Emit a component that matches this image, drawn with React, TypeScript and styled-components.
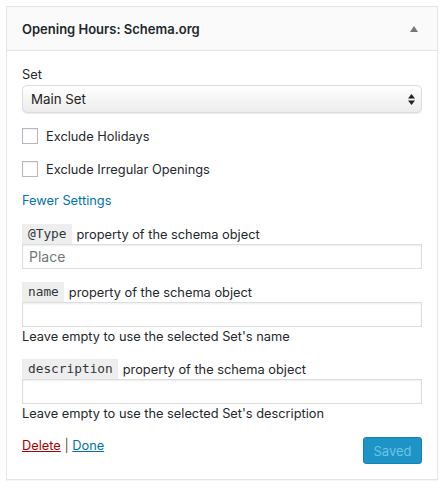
import React from "react";
import styled, { createGlobalStyle } from "styled-components";

const Global = createGlobalStyle`
  html, body { margin: 0; padding: 0; background: #fff; }
  body { font-family: "Inter", "Noto Sans", sans-serif; color: #23282d; }
  * { box-sizing: border-box; }
`;

const Page = styled.div`
  padding: 6px 4px 6px 6px;
`;

const Widget = styled.div`
  width: 432px;
  border: 1px solid #e5e5e5;
  background: #fff;
  box-shadow: 0 1px 1px rgba(0,0,0,0.04);
`;

const Header = styled.div`
  height: 44px;
  display: flex;
  align-items: center;
  justify-content: space-between;
  padding: 0 19px 0 15px;
  background: #fafafa;
  border-bottom: 1px solid #e5e5e5;
`;

const Title = styled.h3`
  margin: 0;
  font-size: 13px;
  font-weight: 600;
  color: #23282d;
`;

const Arrow = styled.span`
  width: 0;
  height: 0;
  border-left: 4px solid transparent;
  border-right: 4px solid transparent;
  border-bottom: 6px solid #72777c;
`;

const Body = styled.div`
  padding: 15px 15px 15px 15px;
  font-size: 12.8px;
`;

const Label = styled.div`
  line-height: 18px;
  margin-bottom: 1px;
`;

const SelectBox = styled.div`
  height: 28px;
  display: flex;
  align-items: center;
  justify-content: space-between;
  padding: 0 6px 0 8px;
  border: 1px solid #dcdcdc;
  border-radius: 5px;
  background: linear-gradient(#ffffff, #ececec);
  box-shadow: 0 1px 1px rgba(0,0,0,0.08);
  font-size: 13.3px;
  color: #222;
`;

const CheckRow = styled.label<{ $top: number }>`
  display: flex;
  align-items: center;
  gap: 8px;
  height: 16px;
  margin-top: ${(p) => p.$top}px;
`;

const Box = styled.span`
  width: 16px;
  height: 16px;
  border: 1px solid #b4b9be;
  background: #fff;
  box-shadow: inset 0 1px 2px rgba(0,0,0,0.07);
`;

const Link = styled.a<{ $danger?: boolean; $underline?: boolean }>`
  color: ${(p) => (p.$danger ? "#a00" : "#0073aa")};
  text-decoration: ${(p) => (p.$underline ? "underline" : "none")};
  cursor: pointer;
`;

const LinkLine = styled.div<{ $top: number }>`
  margin-top: ${(p) => p.$top}px;
  line-height: 18px;
  color: #555;
`;

const FieldLabel = styled.div<{ $top: number }>`
  margin-top: ${(p) => p.$top}px;
  display: flex;
  align-items: center;
  gap: 5px;
  height: 20px;
`;

const Code = styled.code`
  background: #eeeeee;
  padding: 0 5px 0 6px;
  height: 20px;
  line-height: 20px;
  font-family: "DejaVu Sans Mono", monospace;
  font-size: 12.8px;
  color: #32373c;
`;

const Input = styled.div`
  height: 25px;
  border: 1px solid #ddd;
  box-shadow: inset 0 1px 2px rgba(0,0,0,0.07);
  padding: 0 6px;
  display: flex;
  align-items: center;
  font-size: 14px;
  color: #72777c;
`;

const Help = styled.div`
  margin-top: 1px;
  line-height: 18px;
`;

const Footer = styled.div`
  margin-top: 14px;
  display: flex;
  justify-content: space-between;
  align-items: flex-start;
`;

const Button = styled.button`
  margin-top: 0;
  width: 59px;
  height: 27px;
  border: 1px solid #1582b6;
  border-radius: 3px;
  background: #1e93c6;
  color: #6cc3e6;
  font-family: inherit;
  font-size: 13px;
  padding: 0;
`;

export default function App() {
  return (
    <>
      <Global />
      <Page>
        <Widget>
          <Header>
            <Title>Opening Hours: Schema.org</Title>
            <Arrow />
          </Header>
          <Body>
            <Label>Set</Label>
            <SelectBox>
              <span>Main Set</span>
              <svg width="7" height="11" viewBox="0 0 7 11">
                <path d="M3.5 0 L7 4.5 H0 Z M3.5 11 L7 6.5 H0 Z" fill="#222" />
              </svg>
            </SelectBox>
            <CheckRow $top={15}>
              <Box />
              <span>Exclude Holidays</span>
            </CheckRow>
            <CheckRow $top={17}>
              <Box />
              <span>Exclude Irregular Openings</span>
            </CheckRow>
            <LinkLine $top={15}>
              <Link>Fewer Settings</Link>
            </LinkLine>
            <FieldLabel $top={14}>
              <Code>@Type</Code>
              <span>property of the schema object</span>
            </FieldLabel>
            <Input>Place</Input>
            <FieldLabel $top={13}>
              <Code>name</Code>
              <span>property of the schema object</span>
            </FieldLabel>
            <Input />
            <Help>Leave empty to use the selected Set's name</Help>
            <FieldLabel $top={13}>
              <Code>description</Code>
              <span>property of the schema object</span>
            </FieldLabel>
            <Input />
            <Help>Leave empty to use the selected Set's description</Help>
            <Footer>
              <LinkLine $top={0}>
                <Link $danger $underline>Delete</Link> | <Link $underline>Done</Link>
              </LinkLine>
              <Button>Saved</Button>
            </Footer>
          </Body>
        </Widget>
      </Page>
    </>
  );
}
